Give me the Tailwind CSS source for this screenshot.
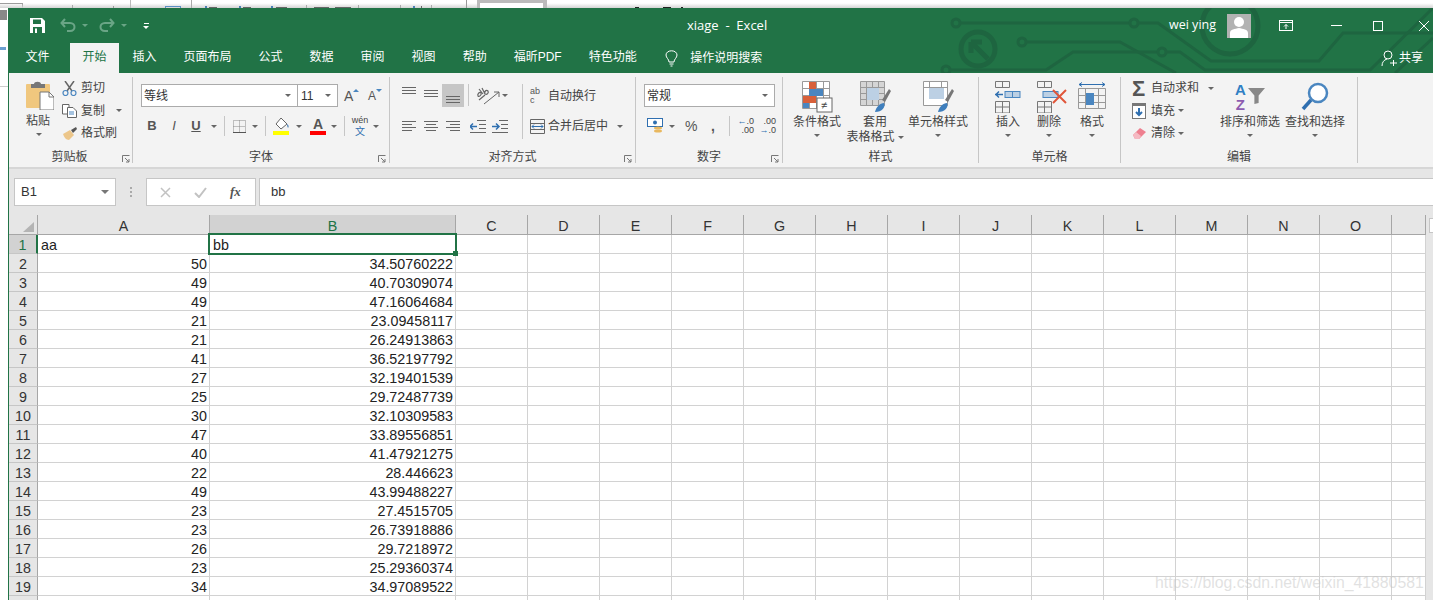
<!DOCTYPE html>
<html lang="en">
<head>
    <meta charset="UTF-8">
    <title>xiage - Excel</title>
    <script src="https://cdn.jsdelivr.net/npm/@tailwindcss/browser@4"></script>
</head>
<body class="relative w-[1433px] h-[600px] overflow-hidden bg-white font-['Liberation_Sans','Noto_Sans_CJK_SC',sans-serif] text-xs text-[#444]">
    <!-- Window behind -->
    <svg class="absolute left-0 top-0" width="1433" height="100" viewBox="0 0 1433 100">
        <rect x="0" y="3" width="22" height="1" fill="#999"/>
        <rect x="22" y="3" width="1" height="5" fill="#999"/>
        <rect x="0" y="10" width="7" height="10" fill="#555" opacity=".7"/>
        <rect x="0" y="47" width="6" height="3" fill="#6b9fd0"/>
        <rect x="0" y="86" width="8" height="1" fill="#ccc"/>
    </svg>
    <div class="relative h-2 bg-gradient-to-b from-white/0 from-40% to-[#d4d4d4]">
        <svg class="absolute left-0 top-0" width="1433" height="8" viewBox="0 0 1433 8">
            <rect x="72" y="5" width="1" height="3" fill="#aaa"/>
            <rect x="113" y="6" width="1" height="2" fill="#999"/>
            <rect x="130" y="0" width="1" height="8" fill="#bbb"/>
            <rect x="165.500" y="6.500" width="15" height="3" fill="none" stroke="#5b8fc4"/>
            <rect x="191" y="0" width="1" height="8" fill="#aaa"/>
            <rect x="205" y="6" width="2" height="2" fill="#4a7fb5"/><rect x="209" y="7" width="8" height="1" fill="#666"/>
            <rect x="239" y="6" width="2" height="2" fill="#4a7fb5"/><rect x="243" y="7" width="8" height="1" fill="#666"/>
            <rect x="271" y="6" width="2" height="2" fill="#4a7fb5"/><rect x="276" y="7" width="11" height="1" fill="#666"/>
            <rect x="306" y="5" width="1" height="3" fill="#aaa"/>
            <rect x="314" y="7" width="15" height="1" fill="#666"/><rect x="335" y="7" width="16" height="1" fill="#666"/>
            <rect x="358" y="5" width="1" height="3" fill="#aaa"/><rect x="400" y="5" width="1" height="3" fill="#aaa"/>
            <rect x="413" y="6" width="2" height="2" fill="#4a7fb5"/><rect x="421" y="6" width="1" height="2" fill="#666"/><rect x="431" y="5" width="1" height="3" fill="#aaa"/>
            <rect x="466" y="0" width="1" height="8" fill="#999"/>
            <rect x="477" y="0" width="70" height="8" fill="#bbb"/><rect x="480" y="3" width="63" height="5" fill="#fff"/>
            <rect x="635" y="7" width="4" height="1" fill="#222"/><rect x="663" y="7" width="8" height="1" fill="#222"/><rect x="681" y="7" width="2" height="1" fill="#222"/>
        </svg>
    </div>
    <div class="relative flex flex-col ml-2 h-[592px] border-l border-[#217346] bg-[#e6e6e6] overflow-hidden">
        <!-- Green header -->
        <div class="relative shrink-0 h-[65px] -ml-px bg-[#217346] text-white">
            <svg class="absolute right-0 top-0" width="493" height="65" viewBox="940 8 493 65" fill="none" stroke="#1e6540" stroke-width="3">
                <circle cx="956" cy="23" r="4"/><path d="M960 23H1130"/><circle cx="1134" cy="23" r="4"/>
                <path d="M1138 23H1158L1211 61H1319L1343 33H1433"/>
                <circle cx="1022" cy="42" r="4"/><path d="M1026 42H1120L1176 73"/>
                <circle cx="946" cy="70" r="4"/><path d="M950 70H1046L1073 52H1158"/><circle cx="1162" cy="52" r="4"/>
                <path d="M1166 52H1180L1205 70H1370L1433 8M1395 73L1433 38"/>
                <circle cx="978" cy="49" r="17" stroke-width="5"/><path d="M971 42L988 59M971 42H982M971 42V53" stroke-width="5"/>
                <circle cx="1230" cy="26" r="28" stroke-width="5"/>
            </svg>
            <!-- Title bar -->
            <div class="relative h-[35px] flex items-center">
                <svg class="ml-[22px]" width="15" height="15" viewBox="0 0 15 15"><path d="M0 0H12L15 3V15H0Z" fill="#fff"/><rect x="3" y="1.500" width="8" height="4.500" fill="#217346"/><rect x="3" y="9" width="9" height="6" fill="#217346"/><rect x="5" y="10.500" width="2" height="4.500" fill="#fff"/></svg>
                <svg class="ml-[15px]" width="16" height="15" viewBox="0 0 16 15" fill="none" stroke="#6aa586" stroke-width="2"><path d="M5 1L1.500 5L5 9M2 5H10C16 5 16 13 10 13H7"/></svg>
                <div class="ml-[6px] w-0 h-0 border-x-[3px] border-t-[3px] border-x-transparent border-t-[#6aa586]"></div>
                <svg class="ml-[11px]" width="16" height="15" viewBox="0 0 16 15" fill="none" stroke="#6aa586" stroke-width="2"><path d="M11 1L14.500 5L11 9M14 5H6C0 5 0 13 6 13H9"/></svg>
                <div class="ml-[6px] w-0 h-0 border-x-[3px] border-t-[3px] border-x-transparent border-t-[#6aa586]"></div>
                <div class="ml-[16px] flex flex-col items-center gap-[2px]"><div class="w-[5px] h-px bg-white"></div><div class="w-0 h-0 border-x-[3px] border-t-[3px] border-x-transparent border-t-white"></div></div>
                <div class="absolute left-[679px] top-[9px] font-['Open_Sans',sans-serif] text-[13px] leading-4 whitespace-pre">xiage  -  Excel</div>
                <div class="ml-auto flex items-center">
                    <span class="font-['Open_Sans',sans-serif] text-[12.500px]">wei ying</span>
                    <div class="ml-[11px] w-6 h-6 bg-[#b2b2b2] overflow-hidden">
                        <svg width="24" height="24" viewBox="0 0 24 24" fill="#fff"><circle cx="12" cy="8" r="5"/><path d="M3 24V19C3 15 8 15 12 14C16 15 21 15 21 19V24Z"/></svg>
                    </div>
                    <svg class="ml-[28px]" width="14" height="11" viewBox="0 0 14 11" fill="none" stroke="#fff"><rect x=".5" y=".5" width="13" height="10"/><path d="M0 2.500H14M7 9V4.500M5 6.500L7 4.500L9 6.500"/></svg>
                    <div class="ml-[38px] w-[11px] h-px bg-white"></div>
                    <div class="ml-[31px] w-[10px] h-[10px] border border-white"></div>
                    <svg class="ml-[36px] mr-[4px]" width="10" height="10" viewBox="0 0 10 10" stroke="#fff"><path d="M0 0L10 10M10 0L0 10"/></svg>
                </div>
            </div>
            <!-- Tabs -->
            <div class="relative h-[30px] flex pl-[5px] leading-[28px]">
                <div class="px-[12.500px] mr-2">文件</div>
                <div class="px-[12.500px] bg-[#f3f3f3] text-[#217346]">开始</div>
                <div class="px-[13.500px]">插入</div>
                <div class="px-[13.500px]">页面布局</div>
                <div class="px-[13.500px]">公式</div>
                <div class="px-[13.500px]">数据</div>
                <div class="px-[13.500px]">审阅</div>
                <div class="px-[13.500px]">视图</div>
                <div class="px-[13.500px]">帮助</div>
                <div class="px-[13.500px]">福昕PDF</div>
                <div class="px-[13.500px]">特色功能</div>
                <div class="ml-[15px] flex items-center gap-[12px]">
                    <svg width="13" height="17" viewBox="0 0 13 17" fill="none" stroke="#fff"><path d="M4 12C4 9 1 8 1 5C1 2.500 3.500 .8 6.500 .8C9.500 .8 12 2.500 12 5C12 8 9 9 9 12ZM4.500 14H8.500M5.500 16H7.500"/></svg>
                    <span>操作说明搜索</span>
                </div>
                <div class="ml-auto mr-[10px] flex items-center gap-[2px]">
                    <svg width="16" height="17" viewBox="0 0 16 17" fill="none" stroke="#fff"><circle cx="7" cy="5" r="4"/><path d="M1 16C1 12 3 10 6 9M9 13H16M12.500 10V16"/></svg>
                    <span>共享</span>
                </div>
            </div>
        </div>

        <!-- Ribbon -->
        <div class="shrink-0 h-[94px] flex items-start bg-[#f3f3f3] border-b-2 border-[#d6d6d6] box-content">
            <!-- Clipboard -->
            <div class="mt-1 w-[124px] h-[86px] flex flex-col border-r border-[#c6c6c6]">
                <div class="h-[74px] flex pl-[17px]">
                    <div class="w-7 flex flex-col pt-[4px]">
                        <svg width="28" height="29" viewBox="0 0 28 29"><rect x="0" y="3" width="24" height="24" rx="1" fill="#f0c77e"/><path d="M5 3H8C8 0 15 0 15 3H19V7H5Z" fill="#777"/><path d="M14 11H23L28 16V29H14Z" fill="#fff" stroke="#777"/><path d="M23 11V16H28" fill="none" stroke="#777"/></svg>
                        <span class="mt-[4px] leading-[15px]">粘贴</span>
                        <div class="mt-[4px] ml-[10px] w-0 h-0 border-x-[3px] border-t-[3px] border-x-transparent border-t-[#666]"></div>
                    </div>
                    <div class="ml-2 flex flex-col">
                        <div class="h-[22.500px] flex items-center gap-1"><svg width="15" height="15" viewBox="0 0 15 15" fill="none"><path d="M3 0L10 10M12 0L5 10" stroke="#666" stroke-width="1.500"/><circle cx="3.500" cy="12" r="2.500" stroke="#4a86c0" stroke-width="1.200"/><circle cx="11.500" cy="12" r="2.500" stroke="#4a86c0" stroke-width="1.200"/></svg><span>剪切</span></div>
                        <div class="h-[22.500px] flex items-center gap-1"><svg width="15" height="14" viewBox="0 0 15 14" fill="#fff" stroke="#666"><path d="M.5 .5H7V10H.5Z"/><path d="M5.500 3.500H11L14.500 7V13.500H5.500Z"/><path d="M7 8H12M7 10H12" stroke="#4a86c0"/></svg><span>复制</span><div class="ml-[7px] w-0 h-0 border-x-[3px] border-t-[3px] border-x-transparent border-t-[#666]"></div></div>
                        <div class="h-[22.500px] flex items-center gap-1"><svg width="15" height="13" viewBox="0 0 15 13"><path d="M1 7L8 3L12 8L7 13C4 13 2 10 1 7Z" fill="#ecc68a"/><path d="M9 3L14 0L15 2L11 6Z" fill="#555"/></svg><span>格式刷</span></div>
                    </div>
                </div>
                <div class="relative h-[12px] leading-[12px] text-center -ml-[2px]">剪贴板
                    <svg class="absolute right-[2px] top-[4px]" width="8" height="8" viewBox="0 0 8 8" fill="none" stroke="#777"><path d="M.5 7V.5H7.500M3 3L7 7M7 4V7H4"/></svg>
                </div>
            </div>

            <!-- Font -->
            <div class="mt-1 w-[257px] h-[86px] flex flex-col border-r border-[#c6c6c6]">
                <div class="h-[74px] pl-2 pt-[7px]">
                    <div class="flex items-center h-[23px]">
                        <div class="w-[157px] h-[23px] flex items-center justify-between pl-[2px] pr-[6px] bg-white border border-[#ababab] text-[#333]">等线<div class="w-0 h-0 border-x-[3px] border-t-[3px] border-x-transparent border-t-[#666]"></div></div>
                        <div class="w-[40px] h-[23px] flex items-center justify-between pl-[3px] pr-[6px] bg-white border border-l-0 border-[#ababab] text-[#333]">11<div class="w-0 h-0 border-x-[3px] border-t-[3px] border-x-transparent border-t-[#666]"></div></div>
                        <div class="ml-[6px] w-[20px] flex items-start text-[14px] leading-4 text-[#555]">A<div class="mt-[1px] w-0 h-0 border-x-[3px] border-b-[3px] border-x-transparent border-b-[#4a86c0]"></div></div>
                        <div class="ml-[4px] w-[20px] flex items-start text-[12px] leading-4 text-[#555] pt-[1px]">A<div class="mt-[1px] w-0 h-0 border-x-[3px] border-t-[3px] border-x-transparent border-t-[#4a86c0]"></div></div>
                    </div>
                    <div class="mt-[8px] h-[22px] flex items-center">
                        <div class="w-[22px] text-center font-bold text-[13px] text-[#555]">B</div>
                        <div class="w-[22px] text-center italic text-[13px] text-[#555]">I</div>
                        <div class="w-[22px] text-center underline text-[13px] font-bold text-[#555]">U</div>
                        <div class="ml-[4px] w-0 h-0 border-x-[3px] border-t-[3px] border-x-transparent border-t-[#666]"></div>
                        <div class="ml-[7px] w-px h-5 bg-[#c6c6c6]"></div>
                        <svg class="ml-2" width="13" height="13" viewBox="0 0 13 13" fill="none" stroke="#888" stroke-dasharray="1 1"><path d="M.5 .5H12.500V12.500H.5ZM6.500 .5V12.500M.5 6.500H12.500"/><path d="M0 12.500H13" stroke="#555" stroke-dasharray="none"/></svg>
                        <div class="ml-[6px] w-0 h-0 border-x-[3px] border-t-[3px] border-x-transparent border-t-[#666]"></div>
                        <div class="ml-[7px] w-px h-5 bg-[#c6c6c6]"></div>
                        <svg class="ml-[7px]" width="17" height="17" viewBox="0 0 17 17"><path d="M8 0L14 6L8 11L3 6Z" fill="#fff" stroke="#666"/><path d="M14 6C16 7 16 9 15 10C14 8 14 7 14 6Z" fill="#4a7fb5"/><rect x="0" y="13" width="16" height="4" fill="#ffff00"/></svg>
                        <div class="ml-[6px] w-0 h-0 border-x-[3px] border-t-[3px] border-x-transparent border-t-[#666]"></div>
                        <div class="ml-[8px] w-4 flex flex-col items-center"><span class="text-[14px] leading-[13px] font-bold text-[#555]">A</span><div class="w-4 h-1 bg-[#ff0000]"></div></div>
                        <div class="ml-[5px] w-0 h-0 border-x-[3px] border-t-[3px] border-x-transparent border-t-[#666]"></div>
                        <div class="ml-[7px] w-px h-5 bg-[#c6c6c6]"></div>
                        <div class="ml-[7px] w-4 flex flex-col items-center leading-[9px] text-[9px]"><span>wén</span><span class="mt-[2px] text-[10px] text-[#2f6fb0]">文</span></div>
                        <div class="ml-[5px] w-0 h-0 border-x-[3px] border-t-[3px] border-x-transparent border-t-[#666]"></div>
                    </div>
                </div>
                <div class="relative h-[12px] leading-[12px] text-center">字体
                    <svg class="absolute right-[3px] top-[4px]" width="8" height="8" viewBox="0 0 8 8" fill="none" stroke="#777"><path d="M.5 7V.5H7.500M3 3L7 7M7 4V7H4"/></svg>
                </div>
            </div>

            <!-- Alignment -->
            <div class="mt-1 w-[246px] h-[86px] flex flex-col border-r border-[#c6c6c6]">
                <div class="h-[74px] flex pl-[12px] pt-[7px]">
                    <div class="w-[74px] flex flex-col">
                        <div class="h-[23px] flex items-start">
                            <svg class="mt-[3px]" width="14" height="9" viewBox="0 0 14 9" stroke="#666"><path d="M0 .5H14M0 3.500H14M0 6.500H14"/></svg>
                            <svg class="ml-2 mt-[6px]" width="14" height="9" viewBox="0 0 14 9" stroke="#666"><path d="M0 .5H14M0 3.500H14M0 6.500H14"/></svg>
                            <div class="ml-[4px] w-[22px] h-[23px] flex items-end justify-center pb-[2px] bg-[#c6c6c6]"><svg width="14" height="9" viewBox="0 0 14 9" stroke="#666"><path d="M0 .5H14M0 3.500H14M0 6.500H14"/></svg></div>
                        </div>
                        <div class="mt-[8px] h-[22px] flex items-center gap-2">
                            <svg width="14" height="11" viewBox="0 0 14 11" stroke="#666"><path d="M0 .5H14M0 3.500H10M0 6.500H14M0 9.500H10"/></svg>
                            <svg width="14" height="11" viewBox="0 0 14 11" stroke="#666"><path d="M0 .5H14M2 3.500H12M0 6.500H14M2 9.500H12"/></svg>
                            <svg width="14" height="11" viewBox="0 0 14 11" stroke="#666"><path d="M0 .5H14M4 3.500H14M0 6.500H14M4 9.500H14"/></svg>
                        </div>
                    </div>
                    <div class="w-px h-[22px] bg-[#c6c6c6] -ml-[8px] self-start"></div>
                    <div class="ml-[7px] w-[45px] flex flex-col">
                        <div class="h-[23px] flex items-center gap-[2px]">
                            <svg width="24" height="18" viewBox="0 0 24 18" fill="none" stroke="#666"><path d="M8 17L23 5M23 5H18M23 5V10"/><path d="M3 13L9 8M2 9C1 7 4 4 5 6C6 8 3 10 2 9ZM7 7L3 2" stroke-width="1.200"/><path d="M9 7C8 5 10 2 12 4C13 6 11 8 9 7ZM9 7L6 1" stroke-width="1.200"/></svg>
                            <div class="w-0 h-0 border-x-[3px] border-t-[3px] border-x-transparent border-t-[#666]"></div>
                        </div>
                        <div class="mt-[8px] h-[22px] flex items-center gap-[6px] -ml-[7px] pl-[1px]">
                            <svg width="16" height="13" viewBox="0 0 16 13" fill="none" stroke="#666"><path d="M7 .5H16M9 4.500H16M9 8.500H16M0 12.500H16"/><path d="M0 6.500H7M3 3.500L0 6.500L3 9.500" stroke="#2f6fb0" stroke-width="1.500"/></svg>
                            <svg width="16" height="13" viewBox="0 0 16 13" fill="none" stroke="#666"><path d="M7 .5H16M9 4.500H16M9 8.500H16M0 12.500H16"/><path d="M0 6.500H7M4 3.500L7 6.500L4 9.500" stroke="#2f6fb0" stroke-width="1.500"/></svg>
                        </div>
                    </div>
                    <div class="w-px h-[55px] bg-[#c6c6c6] ml-[1px] self-start"></div>
                    <div class="ml-[7px] flex flex-col">
                        <div class="h-[23px] flex items-center gap-[4px]">
                            <div class="w-[14px] leading-[9px] text-[9px] text-[#555]">ab<br>c</div>
                            <span>自动换行</span>
                        </div>
                        <div class="mt-[8px] h-[22px] flex items-center gap-[3px]">
                            <svg width="15" height="15" viewBox="0 0 15 15" fill="none" stroke="#666"><path d="M.5 .5H14.500V14.500H.5ZM.5 4.500H14.500M.5 10.500H14.500"/><path d="M2 7.500H13M4 5.500L2 7.500L4 9.500M11 5.500L13 7.500L11 9.500" stroke="#2f6fb0"/></svg>
                            <span>合并后居中</span>
                            <div class="ml-[6px] w-0 h-0 border-x-[3px] border-t-[3px] border-x-transparent border-t-[#666]"></div>
                        </div>
                    </div>
                </div>
                <div class="relative h-[12px] leading-[12px] text-center">对齐方式
                    <svg class="absolute right-[3px] top-[4px]" width="8" height="8" viewBox="0 0 8 8" fill="none" stroke="#777"><path d="M.5 7V.5H7.500M3 3L7 7M7 4V7H4"/></svg>
                </div>
            </div>

            <!-- Number -->
            <div class="mt-1 w-[147px] h-[86px] flex flex-col border-r border-[#c6c6c6]">
                <div class="h-[74px] pl-2 pt-[7px]">
                    <div class="w-[131px] h-[23px] flex items-center justify-between pl-[2px] pr-[6px] bg-white border border-[#ababab] text-[#333]">常规<div class="w-0 h-0 border-x-[3px] border-t-[3px] border-x-transparent border-t-[#666]"></div></div>
                    <div class="mt-[8px] h-[22px] flex items-center">
                        <svg class="ml-[3px]" width="16" height="16" viewBox="0 0 16 16"><rect x=".5" y=".5" width="15" height="8" fill="#fff" stroke="#2f6fb0"/><circle cx="8" cy="4.500" r="2" fill="#2f6fb0"/><ellipse cx="11" cy="10" rx="4" ry="1.500" fill="#e9b85f"/><ellipse cx="11" cy="13" rx="4" ry="1.500" fill="#e9b85f"/></svg>
                        <div class="ml-[6px] w-0 h-0 border-x-[3px] border-t-[3px] border-x-transparent border-t-[#666]"></div>
                        <div class="ml-[10px] w-[14px] text-[14px] text-[#555]">%</div>
                        <div class="ml-[7px] w-[14px] text-[14px] font-bold text-center text-[#555]">,</div>
                        <div class="ml-[9px] w-px h-5 bg-[#c6c6c6]"></div>
                        <div class="ml-[7px] w-[17px] text-[9px] leading-[9px] text-right"><span class="text-[#2f6fb0]">←</span>.0<br>.00</div>
                        <div class="ml-[5px] w-[17px] text-[9px] leading-[9px] text-right">.00<br><span class="text-[#2f6fb0]">→</span>.0</div>
                    </div>
                </div>
                <div class="relative h-[12px] leading-[12px] text-center">数字
                    <svg class="absolute right-[3px] top-[4px]" width="8" height="8" viewBox="0 0 8 8" fill="none" stroke="#777"><path d="M.5 7V.5H7.500M3 3L7 7M7 4V7H4"/></svg>
                </div>
            </div>

            <!-- Styles -->
            <div class="mt-1 w-[196px] h-[86px] flex flex-col border-r border-[#c6c6c6]">
                <div class="h-[74px] flex pl-[10px] pt-[4px]">
                    <div class="w-[48px] flex flex-col items-center">
                        <svg width="31" height="32" viewBox="0 0 31 32"><path d="M.5 .5H27.500V27.500H.5ZM.5 7.500H27.500M.5 14.500H27.500M.5 21.500H27.500M7.500 .5V27.500M14.500 .5V27.500M21.500 .5V27.500" fill="#fff" stroke="#999"/><rect x="7" y="1" width="7" height="7" fill="#d8603a"/><rect x="7" y="8" width="14" height="7" fill="#4a86c0"/><rect x="1" y="15" width="13" height="7" fill="#d8603a"/><rect x="1" y="22" width="6" height="5" fill="#4a86c0"/><rect x="15" y="17" width="15" height="14" fill="#fff" stroke="#666"/><text x="19" y="28" font-size="11" fill="#444" stroke="none">≠</text></svg>
                        <span class="mt-[2px] leading-[15px]">条件格式</span>
                        <div class="mt-[4px] w-0 h-0 border-x-[3px] border-t-[3px] border-x-transparent border-t-[#666]"></div>
                    </div>
                    <div class="ml-[7px] w-[54px] flex flex-col items-center">
                        <svg width="31" height="32" viewBox="0 0 31 32"><path d="M.5 .5H24.500V24.500H.5ZM.5 6.500H24.500M.5 12.500H24.500M.5 18.500H24.500M6.500 .5V24.500M12.500 .5V24.500M18.500 .5V24.500" fill="#d5d5d5" stroke="#999"/><rect x="7" y="7" width="12" height="12" fill="#bcd0e4"/><path d="M22 19L29 8L31 10L25 21Z" fill="#777"/><path d="M15 31C16 26 20 22 24 22C26 26 22 31 15 31Z" fill="#3f7fbd"/></svg>
                        <span class="mt-[2px] leading-[15px]">套用</span>
                        <span class="leading-[15px] flex items-center whitespace-nowrap">表格格式<div class="ml-[3px] w-0 h-0 border-x-[3px] border-t-[3px] border-x-transparent border-t-[#666]"></div></span>
                    </div>
                    <div class="ml-[6px] w-[60px] flex flex-col items-center">
                        <svg width="31" height="32" viewBox="0 0 31 32"><path d="M.5 .5H24.500V24.500H.5ZM.5 6.500H24.500M6.500 .5V6.500M18.500 .5V6.500" fill="#fff" stroke="#999"/><rect x="6" y="7" width="15" height="11" fill="#bcd0e4"/><path d="M22 19L29 8L31 10L25 21Z" fill="#777"/><path d="M15 31C16 26 20 22 24 22C26 26 22 31 15 31Z" fill="#3f7fbd"/></svg>
                        <span class="mt-[2px] leading-[15px] whitespace-nowrap">单元格样式</span>
                        <div class="mt-[4px] w-0 h-0 border-x-[3px] border-t-[3px] border-x-transparent border-t-[#666]"></div>
                    </div>
                </div>
                <div class="h-[12px] leading-[12px] text-center">样式</div>
            </div>

            <!-- Cells -->
            <div class="mt-1 w-[142px] h-[86px] flex flex-col border-r border-[#c6c6c6]">
                <div class="h-[74px] flex pl-[17px] pt-[4px]">
                    <div class="w-6 flex flex-col items-center">
                        <svg width="26" height="32" viewBox="0 0 26 32" fill="none" stroke="#777"><path d="M.5 .5H14.500V6.500H.5ZM7.500 .5V6.500M.5 20.500H14.500V32H.5ZM7.500 20.500V32M.5 26H14.500"/><rect x="10" y="10.500" width="15" height="6" fill="#bcd0e4" stroke="#4a86c0"/><path d="M17.500 10.500V16.500" stroke="#4a86c0"/><path d="M0 13.500H8M4 10.500L1 13.500L4 16.500" stroke="#2f6fb0" stroke-width="1.500"/></svg>
                        <span class="mt-[2px] leading-[15px]">插入</span>
                        <div class="mt-[4px] w-0 h-0 border-x-[3px] border-t-[3px] border-x-transparent border-t-[#666]"></div>
                    </div>
                    <div class="ml-[17px] w-6 flex flex-col items-center">
                        <svg class="ml-[8px]" width="32" height="32" viewBox="0 0 32 32" fill="none" stroke="#777"><path d="M.5 .5H14.500V6.500H.5ZM7.500 .5V6.500M.5 20.500H14.500V32H.5ZM7.500 20.500V32M.5 26H14.500"/><rect x="6" y="10.500" width="15" height="6" fill="#bcd0e4" stroke="#4a86c0"/><path d="M16 9L29 22M29 9L16 22" stroke="#e0563a" stroke-width="2"/></svg>
                        <span class="mt-[2px] leading-[15px]">删除</span>
                        <div class="mt-[4px] w-0 h-0 border-x-[3px] border-t-[3px] border-x-transparent border-t-[#666]"></div>
                    </div>
                    <div class="ml-[19px] w-6 flex flex-col items-center">
                        <svg width="28" height="32" viewBox="0 0 28 32" fill="none" stroke="#777"><path d="M1 3.500H27M4 1.500L1 3.500L4 5.500M24 1.500L27 3.500L24 5.500" stroke="#2f6fb0"/><path d="M.5 7.500H27.500V27.500H.5ZM7.500 7.500V27.500M20.500 7.500V27.500M.5 14.500H27.500M.5 21.500H27.500" stroke="#999"/><rect x="8" y="12" width="8" height="12" fill="#4a86c0" stroke="none"/></svg>
                        <span class="mt-[2px] leading-[15px]">格式</span>
                        <div class="mt-[4px] w-0 h-0 border-x-[3px] border-t-[3px] border-x-transparent border-t-[#666]"></div>
                    </div>
                </div>
                <div class="h-[12px] leading-[12px] text-center">单元格</div>
            </div>

            <!-- Editing -->
            <div class="mt-1 w-[237px] h-[86px] flex flex-col border-r border-[#c6c6c6]">
                <div class="h-[74px] flex pl-[11px]">
                    <div class="w-[88px] flex flex-col">
                        <div class="h-[22.500px] flex items-center"><div class="w-[15px] text-[22px] leading-[19px] text-[#555] font-bold">Σ</div><span class="ml-[4px]">自动求和</span><div class="ml-[9px] w-0 h-0 border-x-[3px] border-t-[3px] border-x-transparent border-t-[#666]"></div></div>
                        <div class="h-[22.500px] flex items-center"><svg width="15" height="16" viewBox="0 0 15 16"><rect x=".5" y=".5" width="13" height="15" fill="#fff" stroke="#777"/><rect x="0" y="0" width="14" height="3" fill="#777"/><path d="M7 5V12M4 9L7 12L10 9" fill="none" stroke="#2f6fb0" stroke-width="2"/></svg><span class="ml-[4px]">填充</span><div class="ml-[3px] w-0 h-0 border-x-[3px] border-t-[3px] border-x-transparent border-t-[#666]"></div></div>
                        <div class="h-[22.500px] flex items-center"><svg width="15" height="13" viewBox="0 0 15 13"><path d="M1 8L8 1L14 5L7 12H3Z" fill="#ee7f8f"/><path d="M1 8L4 5L9 9L7 12H3Z" fill="#f5b9c2"/></svg><span class="ml-[4px]">清除</span><div class="ml-[3px] w-0 h-0 border-x-[3px] border-t-[3px] border-x-transparent border-t-[#666]"></div></div>
                    </div>
                    <div class="w-[60px] flex flex-col items-center pt-[4px]">
                        <div class="h-8 w-[30px] flex items-center">
                            <div class="text-[15px] leading-[15px] font-bold text-center"><span class="text-[#2f7fc4]">A</span><br><span class="text-[#8d5cb0]">Z</span></div>
                            <svg class="ml-[2px] -mt-[2px]" width="17" height="16" viewBox="0 0 16 15"><path d="M0 0H16L10 7V14L6 15V7Z" fill="#888"/></svg>
                        </div>
                        <span class="mt-[2px] leading-[15px] whitespace-nowrap">排序和筛选</span>
                        <div class="mt-[4px] w-0 h-0 border-x-[3px] border-t-[3px] border-x-transparent border-t-[#666]"></div>
                    </div>
                    <div class="ml-[5px] w-[60px] flex flex-col items-center pt-[4px]">
                        <svg width="28" height="28" viewBox="0 0 28 28" class="h-8" fill="none"><circle cx="17" cy="10" r="9" stroke="#4a86c0" stroke-width="2.500" fill="#fff"/><path d="M10 17L2 26" stroke="#2f6fb0" stroke-width="3.500"/></svg>
                        <span class="mt-[2px] leading-[15px] whitespace-nowrap">查找和选择</span>
                        <div class="mt-[4px] w-0 h-0 border-x-[3px] border-t-[3px] border-x-transparent border-t-[#666]"></div>
                    </div>
                </div>
                <div class="h-[12px] leading-[12px] text-center">编辑</div>
            </div>
        </div>

        <!-- Formula bar -->
        <div class="shrink-0 h-[46px] flex items-start pt-[9px]">
            <div class="ml-[5px] w-[102px] h-[28px] flex items-center justify-between pl-[6px] pr-[6px] bg-white border border-[#c6c6c6] text-[13px] text-[#333]">B1<div class="w-0 h-0 border-x-[4px] border-t-[4px] border-x-transparent border-t-[#777]"></div></div>
            <div class="ml-[14px] h-[28px] flex flex-col justify-center gap-[2px]"><div class="w-[2px] h-[2px] bg-[#aaa]"></div><div class="w-[2px] h-[2px] bg-[#aaa]"></div><div class="w-[2px] h-[2px] bg-[#aaa]"></div></div>
            <div class="ml-[14px] w-[110px] h-[28px] flex items-center bg-white border border-[#c6c6c6]">
                <svg class="ml-[13px]" width="11" height="11" viewBox="0 0 11 11" stroke="#c2c2c2" stroke-width="1.500"><path d="M1 1L10 10M10 1L1 10"/></svg>
                <svg class="ml-[23px]" width="13" height="11" viewBox="0 0 13 11" fill="none" stroke="#c2c2c2" stroke-width="2"><path d="M1 6L5 10L12 1"/></svg>
                <span class="ml-[23px] font-['Liberation_Serif',serif] italic font-bold text-[13px] text-[#555]">fx</span>
            </div>
            <div class="ml-[3px] flex-1 h-[28px] flex items-center pl-[11px] bg-white border-y border-l border-[#c6c6c6] text-[13px] text-[#333]">bb</div>
        </div>

        <!-- Sheet -->
        <div id="sheet" class="relative shrink-0 w-[1417px] font-['Liberation_Sans',sans-serif] text-[14.300px] text-[#222]"></div>
        <div class="absolute left-[1420px] top-[210px] w-[4px] h-[15px] bg-white border-y border-l border-[#c6c6c6]"></div>
    </div>

    <div class="absolute left-[1155px] top-[573px] whitespace-nowrap font-['Liberation_Sans',sans-serif] text-[15.800px] leading-5 text-[#c4c4c4]/50">https://blog.csdn.net/weixin_41880581</div>

    <script>
        const rows = [
            ['aa', 'bb'], ['50', '34.50760222'], ['49', '40.70309074'], ['49', '47.16064684'], ['21', '23.09458117'],
            ['21', '26.24913863'], ['41', '36.52197792'], ['27', '32.19401539'], ['25', '29.72487739'], ['30', '32.10309583'],
            ['47', '33.89556851'], ['40', '41.47921275'], ['22', '28.446623'], ['49', '43.99488227'], ['23', '27.4515705'],
            ['23', '26.73918886'], ['26', '29.7218972'], ['23', '25.29360374'], ['34', '34.97089522'], ['', '']
        ];
        const cols = 'CDEFGHIJKLMNO'.split('');
        const gridClass = 'grid grid-cols-[29px_172px_246px_repeat(13,72px)_34px]';
        const headCell = 'h-[20px] flex items-center justify-center border-b border-r border-[#a6a6a6] pt-[4px] text-[#333]';
        const blank = '<div class="bg-white border-b border-r border-[#d2d2d2]"></div>';

        let html = `<div class="${gridClass}">
            <div class="${headCell} relative"><svg class="absolute left-[14px] top-[7px]" width="11" height="10" viewBox="0 0 11 10"><path d="M11 0V10H0Z" fill="#b4b4b4"/></svg></div>
            <div class="${headCell}">A</div>
            <div class="h-[20px] flex items-center justify-center border-b border-r border-[#a6a6a6] pt-[4px] bg-[#d2d2d2] text-[#217346]">B</div>
            ${cols.map(c => `<div class="${headCell}">${c}</div>`).join('')}
            <div class="h-[20px] border-b border-r border-[#a6a6a6]"></div>
        </div>`;

        rows.forEach((row, i) => {
            const first = i === 0;
            html += `<div class="${gridClass} grid-rows-[19px] leading-[21px]">
                <div class="${first ? 'bg-[#d2d2d2] text-[#217346] border-r-2 border-r-[#217346]' : 'bg-[#e6e6e6] text-[#333] border-r border-r-[#a6a6a6]'} border-b border-b-[#c6c6c6] text-center">${i < 19 ? i + 1 : ''}</div>
                <div class="bg-white border-b border-r border-[#d2d2d2] ${first ? 'pl-[3px]' : 'text-right pr-[2px]'}">${row[0]}</div>
                <div class="relative ${first ? 'z-10 pl-[3px]' : 'text-right pr-[2px]'} bg-white border-b border-r border-[#d2d2d2]">${row[1]}${first ? '<div class="absolute -left-[2px] -top-[2px] -right-[2px] -bottom-[2px] border-2 border-[#217346]"></div><div class="absolute -right-[3px] -bottom-[3px] w-[5px] h-[5px] bg-[#217346]"></div>' : ''}</div>
                ${blank.repeat(14)}
            </div>`;
        });
        document.getElementById('sheet').innerHTML = html;
    </script>
</body>
</html>
